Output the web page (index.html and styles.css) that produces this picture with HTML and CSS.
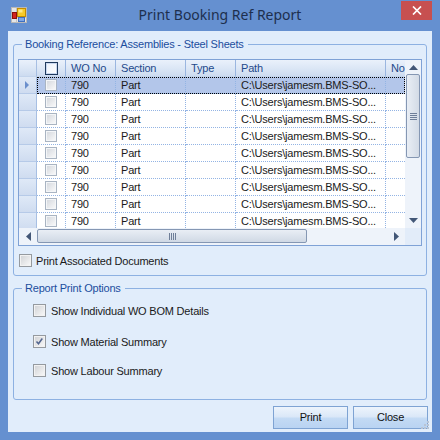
FILE: index.html
```html
<!DOCTYPE html>
<html lang="en">
<head>
	<meta charset="UTF-8">
	<title>Print Booking Ref Report</title>
	<link rel="stylesheet" href="styles.css">
</head>
<body>
	<div class="window">
		<div class="titlebar">
			<svg class="app-icon" width="16" height="16" viewBox="0 0 16 16">
				<rect x="0.5" y="0.5" width="15" height="15" fill="#e6e6e6" stroke="#b8b8b8"/>
				<line x1="5.5" y1="0.5" x2="5.5" y2="15.5" stroke="#c4c4c4"/>
				<line x1="0.5" y1="10.5" x2="15.5" y2="10.5" stroke="#c4c4c4"/>
				<rect x="6.5" y="1.5" width="8" height="8" fill="#f7c928" stroke="#c48d00"/>
				<rect x="7.5" y="2.5" width="4" height="3" fill="#ffe98a"/>
				<rect x="1.5" y="5.5" width="4" height="6" fill="#d3231e" stroke="#8c0f0c"/>
				<rect x="7.5" y="10.5" width="6" height="4" fill="#7fa8e6" stroke="#3f6fc0"/>
			</svg>
			<div class="title">Print Booking Ref Report</div>
			<div class="close-btn">
				<svg width="10" height="9" viewBox="0 0 10 9">
					<path d="M1 0.5 L9 8.5 M9 0.5 L1 8.5" stroke="#fff" stroke-width="1.7"/>
				</svg>
			</div>
		</div>

		<div class="client">
			<fieldset class="group group-ref">
				<legend>Booking Reference: Assemblies - Steel Sheets</legend>
				<div class="grid">
					<div class="grid-main">
						<div class="grid-cols">
							<div class="row head">
								<div class="rh"></div>
								<div class="cells">
									<div class="cell c-chk"><span class="hbox"></span></div>
									<div class="cell c-wo">WO No</div>
									<div class="cell c-sec">Section</div>
									<div class="cell c-type">Type</div>
									<div class="cell c-path">Path</div>
									<div class="cell c-no">No</div>
								</div>
							</div>
							<div class="row selected">
								<div class="rh"><span class="marker"></span></div>
								<div class="cells">
									<div class="cell c-chk"><span class="rbox"></span></div>
									<div class="cell c-wo">790</div>
									<div class="cell c-sec">Part</div>
									<div class="cell c-type"></div>
									<div class="cell c-path">C:\Users\jamesm.BMS-SO...</div>
									<div class="cell c-no"></div>
								</div>
							</div>
							<div class="row">
								<div class="rh"></div>
								<div class="cells">
									<div class="cell c-chk"><span class="rbox"></span></div>
									<div class="cell c-wo">790</div>
									<div class="cell c-sec">Part</div>
									<div class="cell c-type"></div>
									<div class="cell c-path">C:\Users\jamesm.BMS-SO...</div>
									<div class="cell c-no"></div>
								</div>
							</div>
							<div class="row">
								<div class="rh"></div>
								<div class="cells">
									<div class="cell c-chk"><span class="rbox"></span></div>
									<div class="cell c-wo">790</div>
									<div class="cell c-sec">Part</div>
									<div class="cell c-type"></div>
									<div class="cell c-path">C:\Users\jamesm.BMS-SO...</div>
									<div class="cell c-no"></div>
								</div>
							</div>
							<div class="row">
								<div class="rh"></div>
								<div class="cells">
									<div class="cell c-chk"><span class="rbox"></span></div>
									<div class="cell c-wo">790</div>
									<div class="cell c-sec">Part</div>
									<div class="cell c-type"></div>
									<div class="cell c-path">C:\Users\jamesm.BMS-SO...</div>
									<div class="cell c-no"></div>
								</div>
							</div>
							<div class="row">
								<div class="rh"></div>
								<div class="cells">
									<div class="cell c-chk"><span class="rbox"></span></div>
									<div class="cell c-wo">790</div>
									<div class="cell c-sec">Part</div>
									<div class="cell c-type"></div>
									<div class="cell c-path">C:\Users\jamesm.BMS-SO...</div>
									<div class="cell c-no"></div>
								</div>
							</div>
							<div class="row">
								<div class="rh"></div>
								<div class="cells">
									<div class="cell c-chk"><span class="rbox"></span></div>
									<div class="cell c-wo">790</div>
									<div class="cell c-sec">Part</div>
									<div class="cell c-type"></div>
									<div class="cell c-path">C:\Users\jamesm.BMS-SO...</div>
									<div class="cell c-no"></div>
								</div>
							</div>
							<div class="row">
								<div class="rh"></div>
								<div class="cells">
									<div class="cell c-chk"><span class="rbox"></span></div>
									<div class="cell c-wo">790</div>
									<div class="cell c-sec">Part</div>
									<div class="cell c-type"></div>
									<div class="cell c-path">C:\Users\jamesm.BMS-SO...</div>
									<div class="cell c-no"></div>
								</div>
							</div>
							<div class="row">
								<div class="rh"></div>
								<div class="cells">
									<div class="cell c-chk"><span class="rbox"></span></div>
									<div class="cell c-wo">790</div>
									<div class="cell c-sec">Part</div>
									<div class="cell c-type"></div>
									<div class="cell c-path">C:\Users\jamesm.BMS-SO...</div>
									<div class="cell c-no"></div>
								</div>
							</div>
							<div class="row">
								<div class="rh"></div>
								<div class="cells">
									<div class="cell c-chk"><span class="rbox"></span></div>
									<div class="cell c-wo">790</div>
									<div class="cell c-sec">Part</div>
									<div class="cell c-type"></div>
									<div class="cell c-path">C:\Users\jamesm.BMS-SO...</div>
									<div class="cell c-no"></div>
								</div>
							</div>
						</div>
						<div class="vscroll">
							<div class="sb-btn v-btn-up">
								<svg width="9" height="5" viewBox="0 0 9 5"><polygon points="0,5 9,5 4.5,0" fill="#435777"/></svg>
							</div>
							<div class="v-track">
								<div class="v-thumb">
									<span class="grip-h"></span><span class="grip-h"></span><span class="grip-h"></span><span class="grip-h"></span>
								</div>
							</div>
							<div class="sb-btn v-btn-down">
								<svg width="9" height="5" viewBox="0 0 9 5"><polygon points="0,0 9,0 4.5,5" fill="#435777"/></svg>
							</div>
						</div>
					</div>
					<div class="grid-bottom">
						<div class="hscroll">
							<div class="sb-btn h-btn">
								<svg width="5" height="9" viewBox="0 0 5 9"><polygon points="5,0 5,9 0,4.5" fill="#435777"/></svg>
							</div>
							<div class="h-thumb">
								<span class="grip-v"></span><span class="grip-v"></span><span class="grip-v"></span><span class="grip-v"></span>
							</div>
							<div class="h-track"></div>
							<div class="sb-btn h-btn">
								<svg width="5" height="9" viewBox="0 0 5 9"><polygon points="0,0 0,9 5,4.5" fill="#435777"/></svg>
							</div>
						</div>
						<div class="corner"></div>
					</div>
				</div>
				<div class="check-line assoc">
					<span class="box"></span>
					<span>Print Associated Documents</span>
				</div>
			</fieldset>

			<fieldset class="group group-opts">
				<legend>Report Print Options</legend>
				<div class="check-line opt opt-1">
					<span class="box"></span>
					<span>Show Individual WO BOM Details</span>
				</div>
				<div class="check-line opt opt-2">
					<span class="box checked">
						<svg width="11" height="11" viewBox="0 0 11 11"><path d="M2.5 5.5 L4.5 7.8 L8.3 2.5" fill="none" stroke="#52658f" stroke-width="1.5"/></svg>
					</span>
					<span>Show Material Summary</span>
				</div>
				<div class="check-line opt opt-3">
					<span class="box"></span>
					<span>Show Labour Summary</span>
				</div>
			</fieldset>

			<div class="buttons">
				<div class="btn">Print</div>
				<div class="btn">Close</div>
			</div>

			<svg class="size-grip" width="10" height="10" viewBox="0 0 10 10">
				<rect x="7" y="1" width="2" height="2" fill="#b9c4d4"/>
				<rect x="4" y="4" width="2" height="2" fill="#b9c4d4"/>
				<rect x="7" y="4" width="2" height="2" fill="#b9c4d4"/>
				<rect x="1" y="7" width="2" height="2" fill="#b9c4d4"/>
				<rect x="4" y="7" width="2" height="2" fill="#b9c4d4"/>
				<rect x="7" y="7" width="2" height="2" fill="#b9c4d4"/>
			</svg>
		</div>
	</div>
</body>
</html>
```

FILE: styles.css
```css
body{
	margin: 0;
	font-family: "Liberation Sans", Arial, sans-serif;
	font-size: 11px;
	letter-spacing: -0.2px;
	color: #1a1a1a;
}
.window{
	width: 440px;
	height: 440px;
	background-color: #6590d0;
	display: flex;
	flex-direction: column;
}

/* title bar */
.titlebar{
	height: 31px;
	flex: none;
	display: grid;
	grid-template-columns: 1fr auto 1fr;
}
.app-icon{
	margin: 7px 0 0 11px;
}
.title{
	font-family: "Noto Sans", sans-serif;
	font-size: 14px;
	letter-spacing: 0;
	color: #1d2f4e;
	line-height: 30px;
}
.close-btn{
	justify-self: end;
	width: 31px;
	height: 19px;
	margin: 1px 8px 0 0;
	background-color: #c75050;
	display: flex;
	align-items: center;
	justify-content: center;
}

/* client area */
.client{
	position: relative;
	flex: 1;
	margin: 0 8px 8px 8px;
	padding: 0 5px;
	background-color: #e1edfb;
	display: flex;
	flex-direction: column;
}
.group{
	margin: 0;
	padding: 0 4px;
	border: 1px solid #8db1e2;
	border-radius: 3px;
	min-width: 0;
}
.group legend{
	color: #1c4d9e;
	padding: 0 4px 0 3px;
	margin-left: 4px;
	line-height: 13px;
}
.group-ref{
	margin-top: 7px;
	padding-bottom: 8px;
}
.group-opts{
	margin-top: 6px;
	padding-bottom: 22px;
}

/* data grid */
.grid{
	margin-top: 8px;
	height: 187px;
	border: 1px solid #7fa2d6;
	box-sizing: border-box;
	background-color: #fff;
	display: flex;
	flex-direction: column;
}
.grid-main{
	height: 168px;
	display: flex;
	overflow: hidden;
}
.grid-cols{
	width: 386px;
	overflow: hidden;
}
.row{
	display: flex;
	height: 17px;
}
.rh{
	width: 18px;
	flex: none;
	box-sizing: border-box;
	border-right: 1px solid #a7bfe3;
	border-bottom: 1px solid #b6cae8;
	background: linear-gradient(#dfe9f7, #cfdcf0);
	display: flex;
	align-items: center;
}
.cells{
	display: flex;
	flex: none;
}
.cell{
	box-sizing: border-box;
	height: 17px;
	line-height: 16px;
	padding-left: 5px;
	border-right: 1px dotted #93b4e4;
	border-bottom: 1px dotted #93b4e4;
	white-space: nowrap;
	overflow: hidden;
}
.c-chk{ width: 29px; padding: 0; display: flex; align-items: center; justify-content: center; }
.c-wo{ width: 50px; }
.c-sec{ width: 70px; }
.c-type{ width: 50px; }
.c-path{ width: 150px; }
.c-no{ width: 19px; border-right: none; }

.head .rh,
.head .cell{
	background: linear-gradient(#eaf1fb 0%, #dce7f6 50%, #cddbf0 100%);
	border-bottom: 1px solid #c3d4ec;
}
.head .cell{
	color: #1e4a8c;
	border-right: 1px solid #9ab6e0;
	line-height: 17px;
}
.head .c-no{ border-right: none; }
.hbox{
	width: 13px;
	height: 13px;
	box-sizing: border-box;
	border: 1px solid #1f3a5e;
	background: linear-gradient(135deg, #eaf1fb, #ffffff);
	box-shadow: inset 0 0 0 1px #c9d8ef;
}
.rbox{
	width: 12px;
	height: 12px;
	box-sizing: border-box;
	border: 1px solid #a9b4c2;
	background: linear-gradient(135deg, #d2d6dc, #fbfbfb);
	box-shadow: inset 0 0 0 1px #f4f6f8;
}
.selected .cells{
	outline: 1px dotted #000;
	outline-offset: -1px;
}
.selected .cell{
	background-color: #b3c6ea;
}
.marker{
	margin-left: 6px;
	width: 0;
	height: 0;
	border-top: 4px solid transparent;
	border-bottom: 4px solid transparent;
	border-left: 4px solid #6b8fcc;
}

/* scrollbars */
.vscroll{
	width: 16px;
	flex: none;
	display: flex;
	flex-direction: column;
	background-color: #eef3fa;
}
.sb-btn{
	display: flex;
	align-items: center;
	justify-content: center;
	flex: none;
}
.v-btn-up{ height: 14px; }
.v-btn-down{ height: 16px; }
.v-track{
	flex: 1;
}
.v-thumb{
	margin: 0 1px;
	height: 84px;
	box-sizing: border-box;
	border: 1px solid #8597b3;
	border-radius: 2px;
	background: linear-gradient(to right, #e9eef5, #d3dbe6);
	display: flex;
	flex-direction: column;
	align-items: center;
	justify-content: center;
	gap: 1px;
}
.grip-h{
	width: 7px;
	height: 1px;
	background-color: #6f7f99;
}
.grid-bottom{
	height: 17px;
	display: flex;
}
.hscroll{
	width: 386px;
	display: flex;
	background-color: #eef3fa;
}
.h-btn{
	width: 18px;
}
.h-thumb{
	width: 270px;
	margin: 1px 0 2px;
	box-sizing: border-box;
	border: 1px solid #8597b3;
	border-radius: 2px;
	background: linear-gradient(#e9eef5, #d0d9e5);
	display: flex;
	align-items: center;
	justify-content: center;
	gap: 1px;
}
.grip-v{
	width: 1px;
	height: 7px;
	background-color: #6f7f99;
}
.h-track{
	flex: 1;
}
.corner{
	flex: 1;
	background-color: #e2ecf9;
}

/* check boxes */
.check-line{
	display: flex;
	align-items: center;
	gap: 4px;
	height: 13px;
}
.box{
	width: 13px;
	height: 13px;
	flex: none;
	box-sizing: border-box;
	border: 1px solid #959a9f;
	background: linear-gradient(135deg, #cfd1d4, #fafafa);
	box-shadow: inset 0 0 0 1px #f2f2f2;
	display: flex;
	align-items: center;
	justify-content: center;
}
.assoc{
	margin: 8px 0 0 1px;
}
.opt{
	margin-left: 15px;
	gap: 5px;
}
.opt-1{ margin-top: 9px; }
.opt-2{ margin-top: 18px; }
.opt-3{ margin-top: 16px; }

/* buttons */
.buttons{
	margin: 6px -1px 0 0;
	display: flex;
	justify-content: flex-end;
	gap: 5px;
}
.btn{
	width: 75px;
	height: 23px;
	box-sizing: border-box;
	border: 1px solid #7ea3d3;
	background: linear-gradient(#edf4fc 0%, #dbe8f8 45%, #c3daf4 55%, #b9d3f2 100%);
	line-height: 21px;
	text-align: center;
	color: #111;
}
.size-grip{
	position: absolute;
	right: 2px;
	bottom: 2px;
}
```
